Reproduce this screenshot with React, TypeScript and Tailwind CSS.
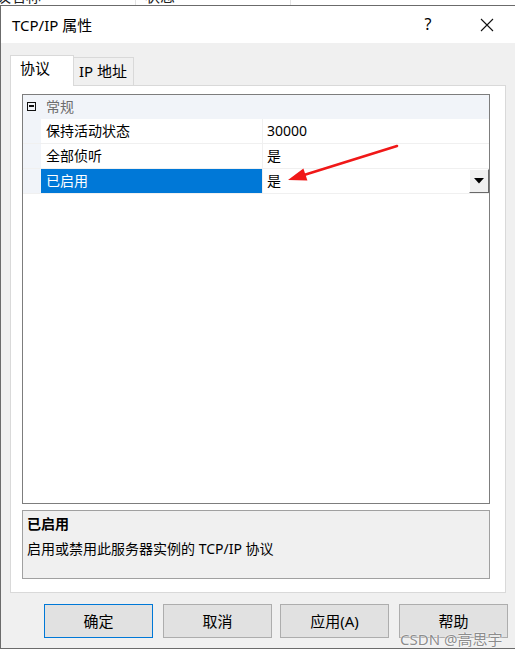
import React from "react";

const F = "font-['Noto_Sans','Noto_Sans_CJK_SC',sans-serif]";

function Row({
  label,
  value,
  selected,
  dropdown,
}: {
  label: string;
  value: string;
  selected?: boolean;
  dropdown?: boolean;
}) {
  return (
    <div className="flex h-[25px] border-b border-[#f0f0f0]">
      <div className="w-[18px] bg-[#f1f4f9]" />
      <div
        className={
          "w-[222px] pl-[5px] flex items-center text-[14px] border-r border-[#f0f0f0] " +
          (selected ? "bg-[#0078d7] text-white" : "bg-white text-black")
        }
      >
        {label}
      </div>
      <div className="flex-1 flex items-center justify-between pl-[4px] text-[14px] bg-white">
        <span>{value}</span>
        {dropdown && (
          <div className="w-[20px] h-[24px] bg-[#f0f0f0] border-t border-l border-white border-r border-b border-r-[#696969] border-b-[#696969] flex items-center justify-center">
            <svg width="10" height="6" viewBox="0 0 10 6">
              <polygon points="0,0 10,0 5,5.5" fill="#000" />
            </svg>
          </div>
        )}
      </div>
    </div>
  );
}

function Btn({ label, primary, className }: { label: string; primary?: boolean; className?: string }) {
  return (
    <div
      className={
        "w-[109px] h-[34px] flex items-center justify-center text-[15px] bg-[#e1e1e1] border " +
        (primary ? "border-[#0078d7] " : "border-[#adadad] ") +
        (className ?? "")
      }
    >
      {label}
    </div>
  );
}

export default function App() {
  return (
    <div className={"relative w-[515px] h-[653px] bg-white overflow-hidden text-black leading-[20px] " + F}>
      {/* parent window header strip */}
      <div className="h-[5px] overflow-hidden flex text-[15px] text-[#222]">
        <div className="w-[136px] border-r border-[#e3e3e3]">
          <span className="block -mt-[14px] -ml-[4px]">议名称</span>
        </div>
        <div className="w-[155px] border-r border-[#e3e3e3]">
          <span className="block -mt-[14px] ml-[9px]">状态</span>
        </div>
      </div>

      {/* dialog */}
      <div className="border-l border-t border-b border-[#6b6b6b] flex flex-col">
        {/* title bar */}
        <div className="h-[37px] bg-white flex items-center">
          <div className="pl-[11px] text-[15px]">TCP/IP 属性</div>
          <div className="ml-auto w-[14px] text-[16px] text-center mr-[45px] -mt-[2px]">?</div>
          <svg width="14" height="14" viewBox="0 0 14 14" className="mr-[21px]">
            <path d="M1 1 L13 13 M13 1 L1 13" stroke="#111" strokeWidth="1.1" />
          </svg>
        </div>

        {/* body */}
        <div className="h-[605px] bg-[#f0f0f0] pl-[9px] pt-[12px] flex flex-col">
          {/* tabs */}
          <div className="flex items-end h-[30px]">
            <div className="relative z-10 w-[64px] h-[31px] -mb-[1px] bg-white border-t border-l border-r border-[#d9d9d9] pl-[9px] pt-[2px] text-[15px]">
              协议
            </div>
            <div className="w-[60px] h-[28px] bg-[#f0f0f0] border-t border-r border-[#d9d9d9] pl-[5px] pt-[3px] text-[15px]">
              IP 地址
            </div>
          </div>

          {/* panel */}
          <div className="w-[496px] h-[508px] bg-white border border-[#d9d9d9] pl-[11px] pt-[8px] flex flex-col">
            {/* property grid */}
            <div className="w-[468px] h-[410px] border border-[#7d7d7d] bg-white flex flex-col">
              <div className="flex h-[24px] bg-[#f1f4f9]">
                <div className="w-[18px] flex items-center justify-center">
                  <div className="w-[9px] h-[9px] border border-[#111] flex items-center justify-center -mt-[2px] -ml-[2px]">
                    <div className="w-[5px] h-[1.5px] bg-[#111]" />
                  </div>
                </div>
                <div className="pl-[5px] flex items-center text-[14px] text-[#6d6d6d]">常规</div>
              </div>
              <Row label="保持活动状态" value="30000" />
              <Row label="全部侦听" value="是" />
              <Row label="已启用" value="是" selected dropdown />
            </div>

            {/* description */}
            <div className="mt-[6px] w-[468px] h-[69px] bg-[#f0f0f0] border border-[#a0a0a0] pl-[4px] pt-[3px] flex flex-col">
              <div className="text-[14px] font-bold leading-[20px]">已启用</div>
              <div className="text-[14px] leading-[20px] mt-[5px]">启用或禁用此服务器实例的 TCP/IP 协议</div>
            </div>
          </div>

          {/* buttons */}
          <div className="flex mt-[11px] ml-[34px]">
            <Btn label="确定" primary />
            <Btn label="取消" className="ml-[10px]" />
            <Btn label="应用(A)" className="ml-[8px]" />
            <Btn label="帮助" className="ml-[10px]" />
          </div>
        </div>
      </div>

      {/* red annotation arrow */}
      <svg className="absolute left-0 top-0 pointer-events-none" width="515" height="653" viewBox="0 0 515 653">
        <line x1="397" y1="146" x2="304" y2="175" stroke="#f01818" strokeWidth="2.6" strokeLinecap="round" />
        <polygon points="288,180 303.4,168.5 307.4,180.5" fill="#f01818" />
      </svg>

      {/* watermark */}
      <div className="absolute left-[400px] top-[629px] text-[15px] text-[#8c8c8c] [text-shadow:0_0_2px_#fff,0_0_1px_#fff]">
        CSDN @高思宇
      </div>
    </div>
  );
}
